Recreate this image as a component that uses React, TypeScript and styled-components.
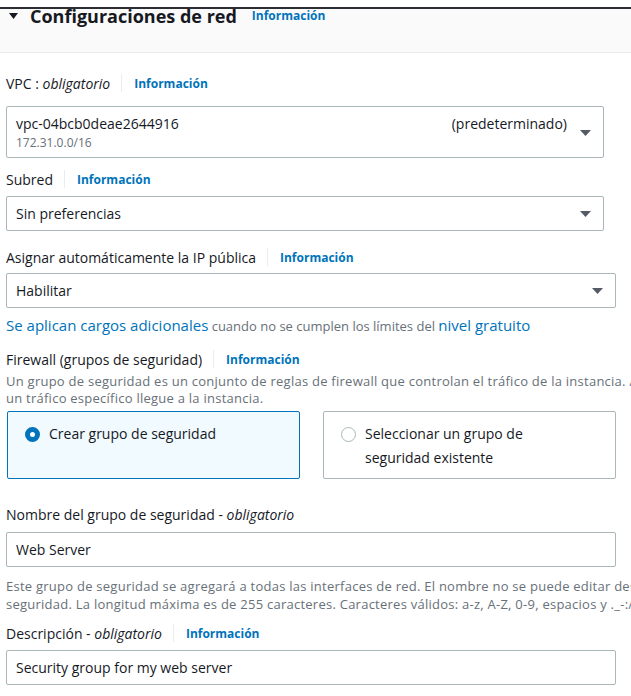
import styled, { createGlobalStyle } from "styled-components";

const GlobalStyle = createGlobalStyle`
  html, body {
    margin: 0;
    padding: 0;
    background: #ffffff;
    overflow: hidden;
  }

  body {
    font-family: "Open Sans", "Noto Sans", sans-serif;
    color: #16191f;
  }
`;

const Page = styled.div`
  width: 840px;
  padding-top: 7px;
`;

const Header = styled.div`
  display: flex;
  align-items: flex-start;
  gap: 12px;
  height: 43px;
  padding-left: 9px;
  background: #fafafa;
  border-top: 2px solid #2a2e33;
  border-bottom: 1px solid #eaeded;
`;

const Caret = styled.svg`
  width: 9px;
  height: 6px;
  margin-top: 4px;
  flex-shrink: 0;
`;

const Title = styled.h2`
  margin: -2px 3px 0 0;
  font-size: 18px;
  line-height: 18px;
  font-weight: 700;
  color: #16191f;
`;

const HeaderInfo = styled.a`
  margin-top: -2px;
  font-size: 12px;
  line-height: 18px;
  font-weight: 700;
  color: #0073bb;
  text-decoration: none;
`;

const Body = styled.div`
  padding: 0 6px;
`;

const LabelRow = styled.div<{ $mt: number }>`
  display: flex;
  align-items: center;
  height: 20px;
  margin-top: ${(p) => p.$mt}px;
  font-size: 14px;
  white-space: nowrap;

  em {
    font-style: italic;
  }
`;

const Separator = styled.span`
  width: 1px;
  height: 18px;
  margin: 0 12px 0 11px;
  background: #eaeded;
`;

const Info = styled.a`
  font-size: 12px;
  font-weight: 700;
  color: #0073bb;
  text-decoration: none;
`;

const SelectBox = styled.div<{ $mt: number; $width: number; $tall?: boolean }>`
  display: flex;
  align-items: center;
  box-sizing: border-box;
  width: ${(p) => p.$width}px;
  height: ${(p) => (p.$tall ? 52 : 35)}px;
  margin-top: ${(p) => p.$mt}px;
  padding: ${(p) => (p.$tall ? "6px 12px 4px 9px" : "0 12px 0 9px")};
  border: 1px solid #aab7b8;
  border-radius: 2px;
  font-size: 14px;
`;

const SelectText = styled.div`
  flex-grow: 1;
  align-self: stretch;
  display: flex;
  flex-direction: column;
  justify-content: center;
`;

const MainLine = styled.div`
  display: flex;
  justify-content: space-between;
  line-height: 20px;
  padding-right: 13px;
`;

const SubLine = styled.div`
  font-size: 12px;
  line-height: 18px;
  color: #687078;
`;

const Arrow = styled.svg`
  width: 11px;
  height: 6px;
  flex-shrink: 0;
`;

const Note = styled.div`
  margin-top: 7px;
  height: 20px;
  line-height: 20px;
  font-size: 13px;
  color: #687078;
  white-space: nowrap;
`;

const NoteLink = styled.a`
  font-size: 15px;
  color: #0073bb;
  text-decoration: none;
`;

const Help = styled.div<{ $mt: number; $lh: number }>`
  margin-top: ${(p) => p.$mt}px;
  font-size: 13px;
  letter-spacing: 0.25px;
  line-height: ${(p) => p.$lh}px;
  color: #687078;
`;

const HelpLine = styled.span`
  display: block;
  white-space: nowrap;
`;

const Tiles = styled.div`
  display: grid;
  grid-template-columns: 293px 293px;
  gap: 23px;
  margin-top: 4px;
  padding-left: 1px;
`;

const Tile = styled.div<{ $selected?: boolean }>`
  display: flex;
  align-items: flex-start;
  gap: 9px;
  box-sizing: border-box;
  height: 68px;
  padding: 10px 16px 0 17px;
  border: 1px solid ${(p) => (p.$selected ? "#0073bb" : "#aab7b8")};
  border-radius: 2px;
  background: ${(p) => (p.$selected ? "#f1faff" : "#ffffff")};
  font-size: 14px;
  line-height: 24px;
`;

const Radio = styled.span<{ $checked?: boolean }>`
  box-sizing: border-box;
  width: 15px;
  height: 15px;
  margin-top: 5px;
  flex-shrink: 0;
  border-radius: 50%;
  background: #ffffff;
  border: ${(p) => (p.$checked ? "5px solid #0073bb" : "1.5px solid #aab7b8")};
`;

const Input = styled.div<{ $mt: number }>`
  display: flex;
  align-items: center;
  box-sizing: border-box;
  width: 610px;
  height: 35px;
  margin-top: ${(p) => p.$mt}px;
  padding: 0 9px;
  border: 1px solid #aab7b8;
  border-radius: 2px;
  font-size: 14px;
`;

const DownArrow = () => (
  <Arrow viewBox="0 0 11 6">
    <polygon points="0,0 11,0 5.5,6" fill="#545b64" />
  </Arrow>
);

const App = () => {
  return (
    <>
      <GlobalStyle />
      <Page>
        <Header>
          <Caret viewBox="0 0 9 6">
            <polygon points="0,0 9,0 4.5,6" fill="#16191f" />
          </Caret>
          <Title>Configuraciones de red</Title>
          <HeaderInfo>Información</HeaderInfo>
        </Header>

        <Body>
          <LabelRow $mt={20}>
            VPC :&nbsp;<em>obligatorio</em>
            <Separator />
            <Info>Información</Info>
          </LabelRow>
          <SelectBox $mt={13} $width={598} $tall>
            <SelectText>
              <MainLine>
                <span>vpc-04bcb0deae2644916</span>
                <span>(predeterminado)</span>
              </MainLine>
              <SubLine>172.31.0.0/16</SubLine>
            </SelectText>
            <DownArrow />
          </SelectBox>

          <LabelRow $mt={11}>
            Subred
            <Separator />
            <Info>Información</Info>
          </LabelRow>
          <SelectBox $mt={7} $width={598}>
            <SelectText>Sin preferencias</SelectText>
            <DownArrow />
          </SelectBox>

          <LabelRow $mt={16}>
            Asignar automáticamente la IP pública
            <Separator />
            <Info>Información</Info>
          </LabelRow>
          <SelectBox $mt={6} $width={610}>
            <SelectText>Habilitar</SelectText>
            <DownArrow />
          </SelectBox>

          <Note>
            <NoteLink>Se aplican cargos adicionales</NoteLink> cuando no se
            cumplen los límites del <NoteLink>nivel gratuito</NoteLink>
          </Note>

          <LabelRow $mt={14}>
            Firewall (grupos de seguridad)
            <Separator />
            <Info>Información</Info>
          </LabelRow>
          <Help $mt={4} $lh={17}>
            <HelpLine>
              Un grupo de seguridad es un conjunto de reglas de firewall que
              controlan el tráfico de la instancia. Agregue reglas para permitir
              que
            </HelpLine>
            <HelpLine>un tráfico específico llegue a la instancia.</HelpLine>
          </Help>

          <Tiles>
            <Tile $selected>
              <Radio $checked />
              <span>Crear grupo de seguridad</span>
            </Tile>
            <Tile>
              <Radio />
              <span>
                Seleccionar un grupo de
                <br />
                seguridad existente
              </span>
            </Tile>
          </Tiles>

          <LabelRow $mt={25}>
            Nombre del grupo de seguridad -&nbsp;<em>obligatorio</em>
          </LabelRow>
          <Input $mt={8}>Web Server</Input>
          <Help $mt={10} $lh={18}>
            <HelpLine>
              Este grupo de seguridad se agregará a todas las interfaces de red.
              El nombre no se puede editar después de crear el grupo de
            </HelpLine>
            <HelpLine>
              seguridad. La longitud máxima es de 255 caracteres. Caracteres
              válidos: a-z, A-Z, 0-9, espacios y ._-:/()#,@[]+=&amp;;{"{}"}!$*
            </HelpLine>
          </Help>

          <LabelRow $mt={10}>
            Descripción -&nbsp;<em>obligatorio</em>
            <Separator />
            <Info>Información</Info>
          </LabelRow>
          <Input $mt={7}>Security group for my web server</Input>
        </Body>
      </Page>
    </>
  );
};

export default App;
